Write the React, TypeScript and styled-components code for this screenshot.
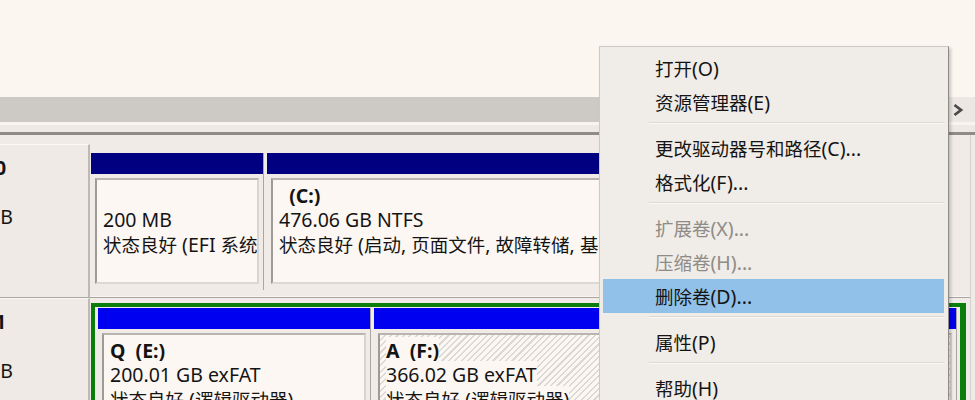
import React from "react";
import styled, { createGlobalStyle } from "styled-components";

const Global = createGlobalStyle`
  html, body { margin: 0; padding: 0; }
  body {
    width: 975px;
    height: 400px;
    overflow: hidden;
    background: #f0ebe6;
    font-family: "Noto Sans", "Noto Sans CJK SC", sans-serif;
    font-size: 19.5px;
    color: #141414;
  }
`;

const Han = styled.span`
  font-family: "Noto Sans CJK SC", sans-serif;
  font-size: 18.5px;
`;

const HAN_RE = /([\u2e80-\u9fff\uf900-\ufaff]+)/;

const Mixed = ({ text }: { text: string }) => (
  <>
    {text.split(HAN_RE).map((s, i) =>
      HAN_RE.test(s) ? <Han key={i}>{s}</Han> : <React.Fragment key={i}>{s}</React.Fragment>
    )}
  </>
);

const Screen = styled.div`
  width: 975px;
  height: 400px;
  overflow: hidden;
  position: relative;
  display: flex;
  flex-direction: column;
`;

const ListPane = styled.div`
  flex: none;
  height: 97px;
  background: #fcf6f1;
`;

const HScroll = styled.div`
  flex: none;
  height: 25px;
  display: flex;
`;

const Track = styled.div`
  flex: 1;
  background: #cdc9c4;
`;

const ArrowBtn = styled.div`
  width: 27px;
  background: #ece7e2;
  display: flex;
  align-items: center;
  padding-left: 4px;
  box-sizing: border-box;
`;

const Splitter = styled.div`
  flex: none;
  height: 13px;
  box-sizing: border-box;
  background: #eee9e4;
  border-top: 3px solid #f8f4f0;
  border-bottom: 3px solid #8f8b87;
`;

const LowerPane = styled.div`
  flex: 1;
  width: 970px;
  padding-top: 9px;
  display: flex;
  flex-direction: column;
  border-right: 1px solid #d3cfca;
`;

const DiskRow = styled.div<{ $h?: number }>`
  display: flex;
  flex: none;
  height: ${(p) => (p.$h ? `${p.$h}px` : "auto")};
`;

const Label = styled.div`
  width: 88px;
  flex: none;
  background: #efeae5;
  border-top: 1px solid #fbf8f5;
  border-right: 2px solid #bdb9b4;
  border-bottom: 1px solid #a9a5a0;
  overflow: hidden;
`;

const LabelInner = styled.div`
  margin-left: -80px;
  padding-top: 11px;
  line-height: 24px;
  white-space: nowrap;
`;

const DiskName = styled.div`
  font-weight: 700;
  display: flex;
  align-items: center;
  gap: 5px;
`;

const DiskIcon = styled.span`
  display: inline-block;
  width: 28px;
  height: 14px;
  background: #8d8a86;
  border-radius: 2px;
`;

const PartArea = styled.div<{ $top: number; $right: number }>`
  flex: 1;
  display: flex;
  padding: ${(p) => p.$top}px ${(p) => p.$right}px 0 1px;
  border-bottom: 1px solid #a9a5a0;
  box-shadow: inset 0 -5px 0 -4px #f8f4f0;
  min-width: 0;
`;

const Partition = styled.div<{ $w?: number }>`
  ${(p) => (p.$w ? `width: ${p.$w}px; flex: none;` : "flex: 1; min-width: 0;")}
  display: flex;
  flex-direction: column;
  border-right: 1px solid #aaa6a1;
  margin-right: 3px;
  height: 137px;
  &:last-child {
    margin-right: 0;
  }
`;

const Header = styled.div<{ $c: string }>`
  height: 21px;
  flex: none;
  background: ${(p) => p.$c};
`;

const BoxWrap = styled.div`
  padding: 4px 4px 0 4px;
`;

const Box = styled.div<{ $hatch?: boolean }>`
  height: 106px;
  box-sizing: border-box;
  border-style: solid;
  border-width: 2px;
  border-color: #b8b4af #d8d4cf #dcd8d3 #9e9a95;
  background: ${(p) =>
    p.$hatch
      ? "repeating-linear-gradient(135deg, #fcf7f2 0px, #fcf7f2 3px, #dcd8d3 3px, #dcd8d3 4.5px)"
      : "#fcf7f2"};
  padding: 4px 0 0 6px;
  line-height: 24px;
  white-space: nowrap;
  overflow: hidden;
`;

const Line = styled.div``;

const TextBg = styled.span`
  background: #fcf7f2;
`;

const VolName = styled.span`
  font-weight: 700;
  white-space: pre;
  background: #fcf7f2;
`;

const Extended = styled.div`
  flex: 1;
  display: flex;
  border: 4px solid #0b7d0b;
  border-right-width: 6px;
  border-bottom: none;
  padding: 1px 3px 0 3px;
  min-width: 0;
`;

const Menu = styled.div`
  position: absolute;
  left: 599px;
  top: 46px;
  width: 350px;
  height: 380px;
  box-sizing: border-box;
  background: #f0ece7;
  border: 1px solid #cdc9c4;
  border-right-color: #8e8a86;
  box-shadow: 2px 2px 3px rgba(0, 0, 0, 0.2);
  padding-top: 4px;
`;

const Item = styled.div<{ $disabled?: boolean; $active?: boolean }>`
  height: 34px;
  margin: 0 4px 0 3px;
  padding-left: 52px;
  display: flex;
  align-items: center;
  white-space: nowrap;
  color: ${(p) => (p.$disabled ? "#8f8b87" : "#141414")};
  background: ${(p) => (p.$active ? "#91c1e8" : "transparent")};
`;

const Sep = styled.div`
  height: 0;
  margin: 3px 4px 7px 49px;
  border-top: 1px solid #dcd8d3;
  border-bottom: 1px solid #faf8f6;
`;

const Chevron = () => (
  <svg width="12" height="14" viewBox="0 0 12 14">
    <polyline points="2.5,2 9,7 2.5,12" fill="none" stroke="#4a4a4a" strokeWidth="2.8" />
  </svg>
);

type Vol = { name?: string; size: string; status: string; hatch?: boolean };

const VolumeBox = ({ v }: { v: Vol }) => (
  <BoxWrap>
    <Box $hatch={v.hatch}>
      <Line>{v.name ? <VolName>{v.name}</VolName> : "\u00a0"}</Line>
      <Line>
        <TextBg>{v.size}</TextBg>
      </Line>
      <Line>
        <TextBg>
          <Mixed text={v.status} />
        </TextBg>
      </Line>
    </Box>
  </BoxWrap>
);

const DiskLabel = ({ n, size }: { n: number; size: string }) => (
  <Label>
    <LabelInner>
      <DiskName>
        <DiskIcon />
        <Mixed text={`磁盘 ${n}`} />
      </DiskName>
      <Line>
        <Mixed text="基本" />
      </Line>
      <Line>{size}</Line>
      <Line>
        <Mixed text="联机" />
      </Line>
    </LabelInner>
  </Label>
);

const menu: ({ t: string; d?: boolean; a?: boolean } | null)[] = [
  { t: "打开(O)" },
  { t: "资源管理器(E)" },
  null,
  { t: "更改驱动器号和路径(C)..." },
  { t: "格式化(F)..." },
  null,
  { t: "扩展卷(X)...", d: true },
  { t: "压缩卷(H)...", d: true },
  { t: "删除卷(D)...", a: true },
  null,
  { t: "属性(P)" },
  null,
  { t: "帮助(H)" },
];

export default function App() {
  return (
    <>
      <Global />
      <Screen>
        <ListPane />
        <HScroll>
          <Track />
          <ArrowBtn>
            <Chevron />
          </ArrowBtn>
        </HScroll>
        <Splitter />
        <LowerPane>
          <DiskRow $h={154}>
            <DiskLabel n={0} size="476.92 GB" />
            <PartArea $top={9} $right={25}>
              <Partition $w={172}>
                <Header $c="#000080" />
                <VolumeBox v={{ size: "200 MB", status: "状态良好 (EFI 系统分区)" }} />
              </Partition>
              <Partition>
                <Header $c="#000080" />
                <VolumeBox
                  v={{
                    name: "  (C:)",
                    size: "476.06 GB NTFS",
                    status: "状态良好 (启动, 页面文件, 故障转储, 基本数据分区)",
                  }}
                />
              </Partition>
            </PartArea>
          </DiskRow>
          <DiskRow>
            <DiskLabel n={1} size="566.03 GB" />
            <PartArea $top={5} $right={4}>
              <Extended>
                <Partition $w={272}>
                  <Header $c="#0000f0" />
                  <VolumeBox
                    v={{ name: "Q  (E:)", size: "200.01 GB exFAT", status: "状态良好 (逻辑驱动器)" }}
                  />
                </Partition>
                <Partition>
                  <Header $c="#0000f0" />
                  <VolumeBox
                    v={{
                      name: "A  (F:)",
                      size: "366.02 GB exFAT",
                      status: "状态良好 (逻辑驱动器)",
                      hatch: true,
                    }}
                  />
                </Partition>
              </Extended>
            </PartArea>
          </DiskRow>
        </LowerPane>
        <Menu>
          {menu.map((m, i) =>
            m ? (
              <Item key={i} $disabled={m.d} $active={m.a}>
                <Mixed text={m.t} />
              </Item>
            ) : (
              <Sep key={i} />
            )
          )}
        </Menu>
      </Screen>
    </>
  );
}
